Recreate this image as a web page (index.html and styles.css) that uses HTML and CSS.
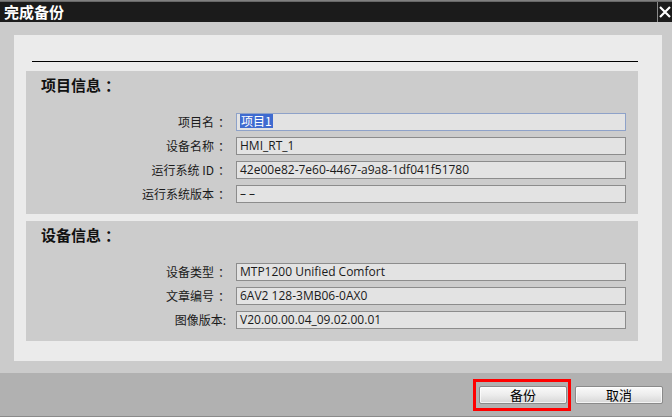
FILE: index.html
```html
<!DOCTYPE html>
<html lang="zh-CN">
<head>
    <meta charset="UTF-8">
    <title>完成备份</title>
    <link rel="stylesheet" href="styles.css">
</head>
<body>
    <div class="dialog">
        <div class="titlebar">
            <div class="title">完成备份</div>
            <div class="close">
                <svg width="13" height="12" viewBox="0 0 13 12">
                    <path d="M1 1 L11 11 M11 1 L1 11" stroke="#fff" stroke-width="2.2" fill="none"/>
                </svg>
            </div>
        </div>

        <div class="content">
            <div class="panel">
                <div class="rule"></div>

                <div class="section section-project">
                    <div class="section-title">项目信息<span class="colon">：</span></div>
                    <div class="rows">
                        <div class="row">
                            <div class="label">项目名<span class="colon">：</span></div>
                            <div class="field field-focus"><span class="selected">项目1</span></div>
                        </div>
                        <div class="row">
                            <div class="label">设备名称<span class="colon">：</span></div>
                            <div class="field">HMI_RT_1</div>
                        </div>
                        <div class="row">
                            <div class="label">运行系统 ID<span class="colon">：</span></div>
                            <div class="field">42e00e82-7e60-4467-a9a8-1df041f51780</div>
                        </div>
                        <div class="row">
                            <div class="label">运行系统版本<span class="colon">：</span></div>
                            <div class="field">– –</div>
                        </div>
                    </div>
                </div>

                <div class="section section-device">
                    <div class="section-title">设备信息<span class="colon">：</span></div>
                    <div class="rows">
                        <div class="row">
                            <div class="label">设备类型<span class="colon">：</span></div>
                            <div class="field">MTP1200 Unified Comfort</div>
                        </div>
                        <div class="row">
                            <div class="label">文章编号<span class="colon">：</span></div>
                            <div class="field">6AV2 128-3MB06-0AX0</div>
                        </div>
                        <div class="row">
                            <div class="label">图像版本:</div>
                            <div class="field">V20.00.00.04_09.02.00.01</div>
                        </div>
                    </div>
                </div>
            </div>
        </div>

        <div class="footer">
            <button class="btn btn-marked">备份</button>
            <button class="btn">取消</button>
        </div>
    </div>
</body>
</html>
```

FILE: styles.css
```css
* {
    margin: 0;
    padding: 0;
    box-sizing: border-box;
}

body {
    width: 672px;
    height: 417px;
    overflow: hidden;
    background: #cbcbcb;
    font-family: "Open Sans", "Noto Sans CJK SC", sans-serif;
    color: #1a1a1a;
}

.dialog {
    display: flex;
    flex-direction: column;
    height: 417px;
}

/* title bar */
.titlebar {
    height: 22px;
    display: flex;
    align-items: stretch;
    justify-content: space-between;
    background: linear-gradient(#8c8c8c 0, #5c5c5c 2px, #1b1b1b 2px);
}

.title {
    padding: 2px 0 0 4px;
    font-family: "Noto Sans CJK SC", sans-serif;
    font-weight: bold;
    font-size: 15px;
    line-height: 19px;
    color: #fff;
}

.close {
    width: 15px;
    margin-top: 2px;
    border-left: 1px solid #8a8a8a;
    display: flex;
    align-items: center;
    justify-content: flex-end;
}

/* content */
.content {
    height: 351px;
    padding: 13px 10px 0 14px;
}

.panel {
    height: 326px;
    background: #ebebeb;
    padding-top: 26px;
}

.rule {
    height: 1px;
    width: 606px;
    margin-left: 18px;
    background: #000;
}

.section {
    width: 612px;
    margin-left: 12px;
    background: #cccccc;
    padding: 4px 0 0 15px;
}

.section-project {
    margin-top: 9px;
    height: 143px;
}

.section-device {
    margin-top: 7px;
    height: 120px;
}

.section-title {
    font-family: "Noto Sans CJK SC", sans-serif;
    font-weight: bold;
    font-size: 15px;
    line-height: 20px;
    color: #111;
}

/* the UI font draws the full-width colon centred, nudge it right */
.colon {
    margin-left: 4px;
    margin-right: -4px;
}

.rows {
    margin-top: 18px;
    display: flex;
    flex-direction: column;
    gap: 6px;
}

.row {
    display: flex;
    align-items: center;
    height: 18px;
}

.label {
    width: 185px;
    text-align: right;
    font-family: "Noto Sans CJK SC", sans-serif;
    font-size: 12px;
    line-height: 18px;
    color: #1a1a1a;
    white-space: nowrap;
}

.field {
    width: 390px;
    height: 18px;
    margin-left: 10px;
    padding-left: 3px;
    background: #e3e3e3;
    border: 1px solid #8c8c8c;
    font-size: 12px;
    line-height: 16px;
    white-space: nowrap;
}

.field-focus {
    border-color: #8ea2c9;
}

.selected {
    display: inline-block;
    background: #3f6bd0;
    color: #fff;
    font-family: "Noto Sans CJK SC", sans-serif;
    line-height: 14px;
    padding: 0 1px;
}

/* footer */
.footer {
    flex: 1;
    display: flex;
    justify-content: flex-end;
    gap: 8px;
    padding: 13px 9px 0 0;
    background: #b1b1b1;
    border-bottom: 1px solid #8a8a8a;
}

.btn {
    position: relative;
    width: 88px;
    height: 18px;
    border: 1px solid #8a8a8a;
    border-radius: 2px;
    background: linear-gradient(#fafafa, #ececec 50%, #d6d6d6);
    box-shadow: inset 0 0 0 1px rgba(255,255,255,0.7);
    font-family: "Noto Sans CJK SC", sans-serif;
    font-size: 13px;
    line-height: 16px;
    color: #000;
}

.btn-marked::after {
    content: "";
    position: absolute;
    left: -7px;
    right: -5px;
    top: -8px;
    bottom: -8px;
    border: 3px solid #ff0000;
}
```
